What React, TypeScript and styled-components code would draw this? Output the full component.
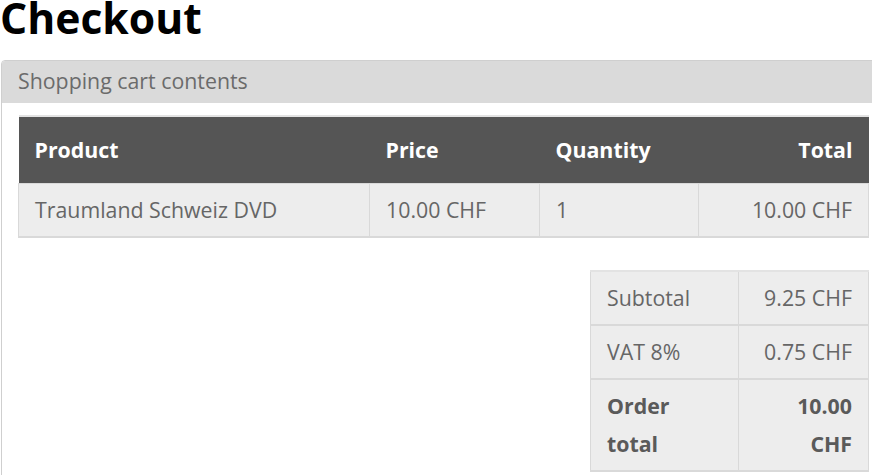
import React from "react";
import styled, { createGlobalStyle } from "styled-components";

const Global = createGlobalStyle`
  html, body { margin: 0; padding: 0; overflow: hidden; background: #fff; }
  body { font-family: "Open Sans", "Liberation Sans", sans-serif; color: #666; }
`;

const Page = styled.div`
  display: flex;
  flex-direction: column;
  width: 886px;
`;

const Title = styled.h1`
  margin: 0 0 24px 0;
  font-size: 42.67px;
  line-height: 36px;
  font-weight: 700;
  color: #000;
`;

const Panel = styled.section`
  margin-left: 1px;
  border: 1px solid #cfcfcf;
  border-radius: 4px 4px 0 0;
  display: flex;
  flex-direction: column;
`;

const PanelHeader = styled.div`
  background: #dadada;
  padding: 0 16px;
  height: 42px;
  line-height: 40px;
  font-size: 21.33px;
  color: #6b6b6b;
  border-radius: 3px 3px 0 0;
`;

const PanelBody = styled.div`
  padding: 12px 16px;
  display: flex;
  flex-direction: column;
  align-items: stretch;
`;

const Table = styled.table<{ $width?: string; $mt?: number }>`
  border-collapse: collapse;
  width: ${(p) => p.$width ?? "100%"};
  margin-top: ${(p) => p.$mt ?? 0}px;
  align-self: flex-end;
  border-top: 2px solid #e3e3e3;
  border-bottom: 2px solid #d4d4d4;
  font-size: 21.33px;
  line-height: 38px;
`;

const Th = styled.th<{ $align?: string; $w?: number }>`
  background: #555;
  color: #fff;
  font-weight: 700;
  text-align: ${(p) => p.$align ?? "left"};
  padding: 14px 16px;
  width: ${(p) => (p.$w ? `${p.$w}px` : "auto")};
  box-sizing: border-box;
`;

const Td = styled.td<{ $align?: string; $bold?: boolean; $w?: number }>`
  background: #ededed;
  border: 1px solid #d9d9d9;
  border-bottom-width: 2px;
  padding: 7px 16px 7px;
  text-align: ${(p) => p.$align ?? "left"};
  font-weight: ${(p) => (p.$bold ? 700 : 400)};
  color: ${(p) => (p.$bold ? "#5a5a5a" : "#666")};
  width: ${(p) => (p.$w ? `${p.$w}px` : "auto")};
  box-sizing: border-box;
  vertical-align: top;
`;

const SummaryRow = styled.tr``;

export default function App() {
  return (
    <>
      <Global />
      <Page>
        <Title>Checkout</Title>
        <Panel>
          <PanelHeader>Shopping cart contents</PanelHeader>
          <PanelBody>
            <Table>
              <thead>
                <tr>
                  <Th $w={351}>Product</Th>
                  <Th $w={170}>Price</Th>
                  <Th $w={159}>Quantity</Th>
                  <Th $align="right">Total</Th>
                </tr>
              </thead>
              <tbody>
                <tr>
                  <Td>Traumland Schweiz DVD</Td>
                  <Td>10.00 CHF</Td>
                  <Td>1</Td>
                  <Td $align="right">10.00 CHF</Td>
                </tr>
              </tbody>
            </Table>
            <Table $width="279px" $mt={32}>
              <tbody>
                <SummaryRow>
                  <Td $w={148}>Subtotal</Td>
                  <Td $align="right">9.25 CHF</Td>
                </SummaryRow>
                <SummaryRow>
                  <Td>VAT 8%</Td>
                  <Td $align="right">0.75 CHF</Td>
                </SummaryRow>
                <SummaryRow>
                  <Td $bold>Order total</Td>
                  <Td $bold $align="right">10.00 CHF</Td>
                </SummaryRow>
              </tbody>
            </Table>
          </PanelBody>
        </Panel>
      </Page>
    </>
  );
}
